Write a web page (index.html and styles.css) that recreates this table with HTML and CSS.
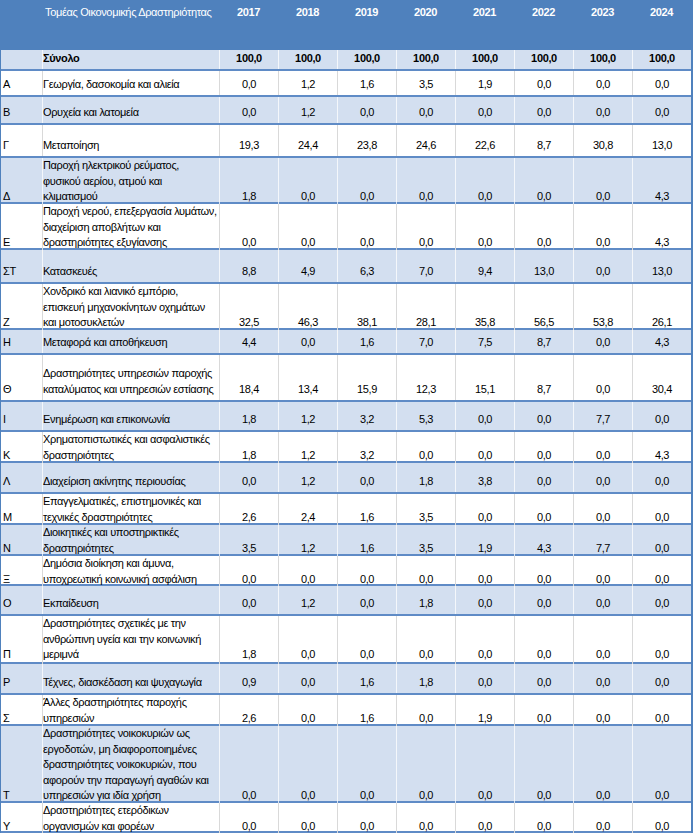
FILE: index.html
```html
<!DOCTYPE html>
<html lang="el">
<head>
<meta charset="utf-8">
<title>Τομέας Οικονομικής Δραστηριότητας</title>
<link rel="stylesheet" href="styles.css">
</head>
<body>
<div class="sheet">
  <div class="row head">
    <div class="c code"></div>
    <div class="c desc">Τομέας Οικονομικής Δραστηριότητας</div>
    <div class="c num">2017</div><div class="c num">2018</div><div class="c num">2019</div><div class="c num">2020</div>
    <div class="c num">2021</div><div class="c num">2022</div><div class="c num">2023</div><div class="c num">2024</div>
  </div>
  <div class="row light total h21">
    <div class="c code"></div>
    <div class="c desc">Σύνολο</div>
    <div class="c num">100,0</div><div class="c num">100,0</div><div class="c num">100,0</div><div class="c num">100,0</div>
    <div class="c num">100,0</div><div class="c num">100,0</div><div class="c num">100,0</div><div class="c num">100,0</div>
  </div>
  <div class="row h26">
    <div class="c code">Α</div>
    <div class="c desc">Γεωργία, δασοκομία και αλιεία</div>
    <div class="c num">0,0</div><div class="c num">1,2</div><div class="c num">1,6</div><div class="c num">3,5</div>
    <div class="c num">1,9</div><div class="c num">0,0</div><div class="c num">0,0</div><div class="c num">0,0</div>
  </div>
  <div class="row light h28">
    <div class="c code">Β</div>
    <div class="c desc">Ορυχεία και λατομεία</div>
    <div class="c num">0,0</div><div class="c num">1,2</div><div class="c num">0,0</div><div class="c num">0,0</div>
    <div class="c num">0,0</div><div class="c num">0,0</div><div class="c num">0,0</div><div class="c num">0,0</div>
  </div>
  <div class="row h33">
    <div class="c code">Γ</div>
    <div class="c desc">Μεταποίηση</div>
    <div class="c num">19,3</div><div class="c num">24,4</div><div class="c num">23,8</div><div class="c num">24,6</div>
    <div class="c num">22,6</div><div class="c num">8,7</div><div class="c num">30,8</div><div class="c num">13,0</div>
  </div>
  <div class="row light h46">
    <div class="c code">Δ</div>
    <div class="c desc">Παροχή ηλεκτρικού ρεύματος,<br>φυσικού αερίου, ατμού και<br>κλιματισμού</div>
    <div class="c num">1,8</div><div class="c num">0,0</div><div class="c num">0,0</div><div class="c num">0,0</div>
    <div class="c num">0,0</div><div class="c num">0,0</div><div class="c num">0,0</div><div class="c num">4,3</div>
  </div>
  <div class="row h46">
    <div class="c code">Ε</div>
    <div class="c desc">Παροχή νερού, επεξεργασία λυμάτων,<br>διαχείριση αποβλήτων και<br>δραστηριότητες εξυγίανσης</div>
    <div class="c num">0,0</div><div class="c num">0,0</div><div class="c num">0,0</div><div class="c num">0,0</div>
    <div class="c num">0,0</div><div class="c num">0,0</div><div class="c num">0,0</div><div class="c num">4,3</div>
  </div>
  <div class="row light h34">
    <div class="c code">ΣΤ</div>
    <div class="c desc">Κατασκευές</div>
    <div class="c num">8,8</div><div class="c num">4,9</div><div class="c num">6,3</div><div class="c num">7,0</div>
    <div class="c num">9,4</div><div class="c num">13,0</div><div class="c num">0,0</div><div class="c num">13,0</div>
  </div>
  <div class="row h46">
    <div class="c code">Ζ</div>
    <div class="c desc">Χονδρικό και λιανικό εμπόριο,<br>επισκευή μηχανοκίνητων οχημάτων<br>και μοτοσυκλετών</div>
    <div class="c num">32,5</div><div class="c num">46,3</div><div class="c num">38,1</div><div class="c num">28,1</div>
    <div class="c num">35,8</div><div class="c num">56,5</div><div class="c num">53,8</div><div class="c num">26,1</div>
  </div>
  <div class="row light h25">
    <div class="c code">Η</div>
    <div class="c desc">Μεταφορά και αποθήκευση</div>
    <div class="c num">4,4</div><div class="c num">0,0</div><div class="c num">1,6</div><div class="c num">7,0</div>
    <div class="c num">7,5</div><div class="c num">8,7</div><div class="c num">0,0</div><div class="c num">4,3</div>
  </div>
  <div class="row h47">
    <div class="c code">Θ</div>
    <div class="c desc">Δραστηριότητες υπηρεσιών παροχής<br>καταλύματος και υπηρεσιών εστίασης</div>
    <div class="c num">18,4</div><div class="c num">13,4</div><div class="c num">15,9</div><div class="c num">12,3</div>
    <div class="c num">15,1</div><div class="c num">8,7</div><div class="c num">0,0</div><div class="c num">30,4</div>
  </div>
  <div class="row light h30">
    <div class="c code">Ι</div>
    <div class="c desc">Ενημέρωση και επικοινωνία</div>
    <div class="c num">1,8</div><div class="c num">1,2</div><div class="c num">3,2</div><div class="c num">5,3</div>
    <div class="c num">0,0</div><div class="c num">0,0</div><div class="c num">7,7</div><div class="c num">0,0</div>
  </div>
  <div class="row h31">
    <div class="c code">Κ</div>
    <div class="c desc">Χρηματοπιστωτικές και ασφαλιστικές<br>δραστηριότητες</div>
    <div class="c num">1,8</div><div class="c num">1,2</div><div class="c num">3,2</div><div class="c num">0,0</div>
    <div class="c num">0,0</div><div class="c num">0,0</div><div class="c num">0,0</div><div class="c num">4,3</div>
  </div>
  <div class="row light h31">
    <div class="c code">Λ</div>
    <div class="c desc">Διαχείριση ακίνητης περιουσίας</div>
    <div class="c num">0,0</div><div class="c num">1,2</div><div class="c num">0,0</div><div class="c num">1,8</div>
    <div class="c num">3,8</div><div class="c num">0,0</div><div class="c num">0,0</div><div class="c num">0,0</div>
  </div>
  <div class="row h31">
    <div class="c code">Μ</div>
    <div class="c desc">Επαγγελματικές, επιστημονικές και<br>τεχνικές δραστηριότητες</div>
    <div class="c num">2,6</div><div class="c num">2,4</div><div class="c num">1,6</div><div class="c num">3,5</div>
    <div class="c num">0,0</div><div class="c num">0,0</div><div class="c num">0,0</div><div class="c num">0,0</div>
  </div>
  <div class="row light h31">
    <div class="c code">Ν</div>
    <div class="c desc">Διοικητικές και υποστηρικτικές<br>δραστηριότητες</div>
    <div class="c num">3,5</div><div class="c num">1,2</div><div class="c num">1,6</div><div class="c num">3,5</div>
    <div class="c num">1,9</div><div class="c num">4,3</div><div class="c num">7,7</div><div class="c num">0,0</div>
  </div>
  <div class="row h30">
    <div class="c code">Ξ</div>
    <div class="c desc">Δημόσια διοίκηση και άμυνα,<br>υποχρεωτική κοινωνική ασφάλιση</div>
    <div class="c num">0,0</div><div class="c num">0,0</div><div class="c num">0,0</div><div class="c num">0,0</div>
    <div class="c num">0,0</div><div class="c num">0,0</div><div class="c num">0,0</div><div class="c num">0,0</div>
  </div>
  <div class="row light h30">
    <div class="c code">Ο</div>
    <div class="c desc">Εκπαίδευση</div>
    <div class="c num">0,0</div><div class="c num">1,2</div><div class="c num">0,0</div><div class="c num">1,8</div>
    <div class="c num">0,0</div><div class="c num">0,0</div><div class="c num">0,0</div><div class="c num">0,0</div>
  </div>
  <div class="row h48">
    <div class="c code">Π</div>
    <div class="c desc">Δραστηριότητες σχετικές με την<br>ανθρώπινη υγεία και την κοινωνική<br>μεριμνά</div>
    <div class="c num">1,8</div><div class="c num">0,0</div><div class="c num">0,0</div><div class="c num">0,0</div>
    <div class="c num">0,0</div><div class="c num">0,0</div><div class="c num">0,0</div><div class="c num">0,0</div>
  </div>
  <div class="row light h31">
    <div class="c code">Ρ</div>
    <div class="c desc">Τέχνες, διασκέδαση και ψυχαγωγία</div>
    <div class="c num">0,9</div><div class="c num">0,0</div><div class="c num">1,6</div><div class="c num">1,8</div>
    <div class="c num">0,0</div><div class="c num">0,0</div><div class="c num">0,0</div><div class="c num">0,0</div>
  </div>
  <div class="row h31">
    <div class="c code">Σ</div>
    <div class="c desc">Άλλες δραστηριότητες παροχής<br>υπηρεσιών</div>
    <div class="c num">2,6</div><div class="c num">0,0</div><div class="c num">1,6</div><div class="c num">0,0</div>
    <div class="c num">1,9</div><div class="c num">0,0</div><div class="c num">0,0</div><div class="c num">0,0</div>
  </div>
  <div class="row light h77">
    <div class="c code">Τ</div>
    <div class="c desc">Δραστηριότητες νοικοκυριών ως<br>εργοδοτών, μη διαφοροποιημένες<br>δραστηριότητες νοικοκυριών, που<br>αφορούν την παραγωγή αγαθών και<br>υπηρεσιών για ιδία χρήση</div>
    <div class="c num">0,0</div><div class="c num">0,0</div><div class="c num">0,0</div><div class="c num">0,0</div>
    <div class="c num">0,0</div><div class="c num">0,0</div><div class="c num">0,0</div><div class="c num">0,0</div>
  </div>
  <div class="row h30">
    <div class="c code">Υ</div>
    <div class="c desc">Δραστηριότητες ετερόδικων<br>οργανισμών και φορέων</div>
    <div class="c num">0,0</div><div class="c num">0,0</div><div class="c num">0,0</div><div class="c num">0,0</div>
    <div class="c num">0,0</div><div class="c num">0,0</div><div class="c num">0,0</div><div class="c num">0,0</div>
  </div>
</div>
</body>
</html>
```

FILE: styles.css
```css
* { box-sizing: border-box; }
html, body { margin: 0; padding: 0; background: #ffffff; }
body {
  font-family: "Liberation Sans", Arial, sans-serif;
  font-size: 11px;
  letter-spacing: -0.35px;
  color: #000000;
}
.sheet {
  width: 693px;
  border-left: 1px solid #4f81bd;
  border-right: 2px solid #4f81bd;
  border-top: 1px solid #4f81bd;
}
.row {
  display: grid;
  grid-template-columns: 41px 177px repeat(8, 59px);
  border-bottom: 2px solid #5f8bc6;
  background: #ffffff;
}
.row.light { background: #d3dff0; }
.c {
  display: flex;
  align-items: flex-end;
  padding: 0 1px 3px;
  line-height: 15.5px;
  border-left: 1px solid #d9d9d9;
  white-space: nowrap;
}
.c.code { border-left: 0; padding-left: 2px; }
.row.light .c { border-left-color: rgba(255,255,255,0.75); }
.row.light .c.code { border-left: 0; }
.c.num { justify-content: center; }
.c.desc { padding-left: 0; }

.head {
  height: 49px;
  background: #4f81bd;
  color: #ffffff;
  border-bottom: 0;
}
.head .c {
  align-items: flex-start;
  padding-top: 4px;
  border-left: 0;
}
.head .c.desc { padding-left: 3px; }
.head .c.num { font-weight: bold; }
.total { font-weight: bold; }

.h21 { height: 21px; }
.h25 { height: 25px; }
.h26 { height: 26px; }
.h28 { height: 28px; }
.h30 { height: 30px; }
.h31 { height: 31px; }
.h33 { height: 33px; }
.h34 { height: 34px; }
.h46 { height: 46px; }
.h47 { height: 47px; }
.h48 { height: 48px; }
.h77 { height: 77px; }
```
